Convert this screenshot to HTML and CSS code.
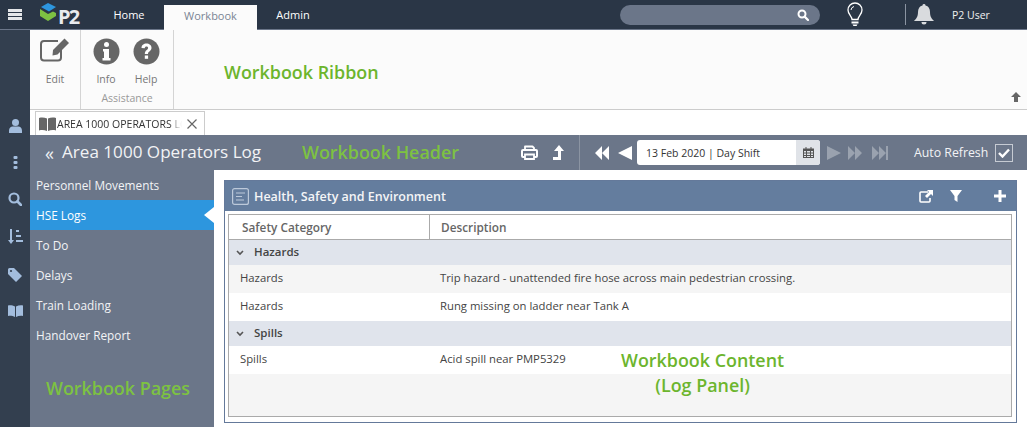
FILE: index.html
```html
<!DOCTYPE html>
<html lang="en">
<head>
<meta charset="utf-8">
<title>Area 1000 Operators Log</title>
<link rel="stylesheet" href="styles.css">
</head>
<body>
<div class="app">
  <header class="top">
    <button class="burger" aria-label="Menu"><span></span><span></span><span></span></button>
    <div class="logo">
      <svg class="logo-mark" width="22" height="22" viewBox="0 0 22 22">
        <polygon points="1,5 8,1 16,5 9,9.500" fill="#2d96de"/>
        <polygon points="0,7 8,12 13,9.500 16,11 16,14 8,19 0,14" fill="#7dc242"/>
      </svg>
      <span class="logo-text">P2</span>
    </div>
    <nav class="top-tabs">
      <a class="top-tab">Home</a>
      <a class="top-tab active">Workbook</a>
      <a class="top-tab">Admin</a>
    </nav>
    <div class="search">
      <svg width="12" height="12" viewBox="0 0 12 12"><circle cx="5" cy="5" r="3.500" fill="none" stroke="#fff" stroke-width="2"/><path d="M7.600 7.600L11 11" stroke="#fff" stroke-width="2.200" stroke-linecap="round"/></svg>
    </div>
    <svg class="bulb" width="16" height="26" viewBox="0 0 16 26"><path d="M5 17.500C5 14.500 1 12.500 1 8a7 7 0 0 1 14 0c0 4.500-4 6.500-4 9.500z" fill="none" stroke="#fff" stroke-width="1.300"/><path d="M4 8a4 4 0 0 1 3-3.500" fill="none" stroke="#fff" stroke-width="1"/><path d="M4.500 19.500h7v2h-7zM5.500 22.500h5l-1 1.500h-3z" fill="#fff"/></svg>
    <div class="top-sep"></div>
    <svg class="bell" width="20" height="21" viewBox="0 0 20 21"><path d="M10 0a1.500 1.500 0 0 1 1.500 1.600C14.500 2.300 16 4.800 16 8c0 4.500 1.500 6.500 4 9H0c2.500-2.500 4-4.500 4-9 0-3.200 1.500-5.700 4.500-6.400A1.500 1.500 0 0 1 10 0zM7.500 18h5a2.500 2.500 0 0 1-5 0z" fill="#d9dbde"/></svg>
    <span class="user">P2 User</span>
  </header>

  <div class="main">
    <aside class="rail">
      <svg width="13" height="14" viewBox="0 0 13 14"><circle cx="6.500" cy="3.500" r="3.500" fill="#a3bddd"/><path d="M0 14v-2.500C0 9 2 7.500 3.500 7.500h6C11 7.500 13 9 13 11.500V14z" fill="#a3bddd"/></svg>
      <svg width="5" height="13" viewBox="0 0 5 13"><rect x="0.500" width="4" height="3" rx="1" fill="#a3bddd"/><rect x="0.500" y="5" width="4" height="3" rx="1" fill="#a3bddd"/><rect x="0.500" y="10" width="4" height="3" rx="1" fill="#a3bddd"/></svg>
      <svg width="14" height="14" viewBox="0 0 14 14"><circle cx="6" cy="6" r="4.500" fill="none" stroke="#a3bddd" stroke-width="2.200"/><path d="M9.500 9.500L13 13" stroke="#a3bddd" stroke-width="2.600" stroke-linecap="round"/></svg>
      <svg width="15" height="16" viewBox="0 0 15 16"><path d="M2 0h2v11h2l-3 4-3-4h2z" fill="#a3bddd"/><path d="M8 1h3v2H8zM8 6h5v2H8zM8 11h7v2H8z" fill="#a3bddd"/></svg>
      <svg width="14" height="14" viewBox="0 0 14 14"><path d="M0 1.500A1.500 1.500 0 0 1 1.500 0H6l8 8-6 6-8-8z" fill="#a3bddd"/><circle cx="3" cy="3" r="1.100" fill="#333f4f"/></svg>
      <svg width="15" height="12" viewBox="0 0 15 12"><path d="M0 .5C2.500 0 5 .5 7 1.500V12C5 11 2.500 10.500 0 11zM15 .5C12.500 0 10 .5 8 1.500V12c2-1 4.500-1.500 7-1z" fill="#a3bddd"/></svg>
    </aside>

    <div class="work">
      <section class="ribbon">
        <div class="rib-group rib-edit">
          <div class="rib-item">
            <svg class="rib-icon" width="30" height="25" viewBox="0 0 30 25"><path d="M21 11v8.500a3 3 0 0 1-3 3H4a3 3 0 0 1-3-3V6a3 3 0 0 1 3-3h14" fill="none" stroke="#666" stroke-width="2"/><path d="M10 12L21.500 .5l4.500 4.500L14.500 16.500l-5 1z" fill="#666" transform="translate(3,0)"/></svg>
            <span>Edit</span>
          </div>
        </div>
        <div class="rib-group rib-assist">
          <div class="rib-items">
            <div class="rib-item">
              <svg class="rib-icon" width="27" height="27" viewBox="0 0 27 27"><circle cx="13.500" cy="13.500" r="13" fill="#666"/><circle cx="13.500" cy="6.500" r="2.500" fill="#fff"/><path d="M10 11h6v9h1.500v2.500h-8V20H11v-6.500h-1z" fill="#fff"/></svg>
              <span>Info</span>
            </div>
            <div class="rib-item">
              <svg class="rib-icon" width="27" height="27" viewBox="0 0 27 27"><circle cx="13.500" cy="13.500" r="13" fill="#666"/><path d="M8.500 10c0-3 2.300-4.500 5-4.500s5 1.700 5 4.300c0 3.500-3.500 3.500-3.500 6.200h-3.200c0-4 3.300-4.200 3.300-6 0-1-.7-1.500-1.600-1.500-1 0-1.600.6-1.800 1.800z" fill="#fff"/><rect x="11.800" y="17.500" width="3.300" height="3.300" fill="#fff"/></svg>
              <span>Help</span>
            </div>
          </div>
          <div class="rib-title">Assistance</div>
        </div>
        <svg class="rib-collapse" width="10" height="10" viewBox="0 0 10 10"><path d="M5 0l5 5H7v5H3V5H0z" fill="#666"/></svg>
      </section>

      <div class="tabstrip">
        <div class="doc-tab">
          <svg width="17" height="14" viewBox="0 0 17 14"><path d="M0 1c3-.8 5.500-.5 8 .5V14c-2.500-1-5-1.300-8-.5zM17 1c-3-.8-5.500-.5-8 .5V14c2.500-1 5-1.300 8-.5z" fill="#666"/></svg>
          <span class="doc-title">AREA 1000 OPERATORS LOG</span>
          <svg class="doc-close" width="10" height="10" viewBox="0 0 10 10"><path d="M.5.500l9 9M9.500.500l-9 9" stroke="#666" stroke-width="1.200"/></svg>
        </div>
      </div>

      <div class="wb-header">
        <span class="back">«</span>
        <h1 class="wb-title">Area 1000 Operators Log</h1>
        <svg class="print" width="17" height="15" viewBox="0 0 17 15"><path d="M4 5V1.500h7.500L13 3v2" fill="none" stroke="#fff" stroke-width="1.800" stroke-linejoin="round"/><path d="M4 12H2a1 1 0 0 1-1-1V6a1 1 0 0 1 1-1h13a1 1 0 0 1 1 1v5a1 1 0 0 1-1 1h-2" fill="none" stroke="#fff" stroke-width="2"/><path d="M4 9.500h9V14H4z" fill="none" stroke="#fff" stroke-width="1.800"/></svg>
        <svg class="up" width="12" height="15" viewBox="0 0 12 15"><path d="M6 0l5 6H8v9H0v-3h5V6H1z" fill="#fff"/></svg>
        <div class="head-sep"></div>
        <svg class="nav nav-rw" width="15" height="14" viewBox="0 0 15 14"><path d="M8 0v14L1 7zM15 0v14L8 7z" fill="#fff"/></svg>
        <svg class="nav nav-prev" width="14" height="14" viewBox="0 0 14 14"><path d="M14 0v14L0 7z" fill="#fff"/></svg>
        <div class="date">
          <span class="date-text">13 Feb 2020 | Day Shift</span>
          <span class="date-btn"><svg width="11" height="11" viewBox="0 0 11 11"><path d="M0 1.500h11V11H0z" fill="#555"/><path d="M2.500 0h1v2.500h-1zM7.500 0h1v2.500h-1z" fill="#555"/><path d="M1 4h2v1.500H1zM4 4h3v1.500H4zM8 4h2v1.500H8zM1 6.500h2V8H1zM4 6.500h3V8H4zM8 6.500h2V8H8zM1 9h2v1H1zM4 9h3v1H4zM8 9h2v1H8z" fill="#e0e3e8"/></svg></span>
        </div>
        <svg class="nav nav-next" width="14" height="14" viewBox="0 0 14 14"><path d="M0 0v14l14-7z" fill="#9aa2af"/></svg>
        <svg class="nav nav-ff" width="15" height="14" viewBox="0 0 15 14"><path d="M0 0v14l7-7zM7 0v14l7-7z" fill="#9aa2af"/></svg>
        <svg class="nav nav-end" width="16" height="14" viewBox="0 0 16 14"><path d="M0 0v14l7-7zM7 0v14l7-7zM14 0h2v14h-2z" fill="#9aa2af"/></svg>
        <span class="auto">Auto Refresh</span>
        <span class="check"><svg width="12" height="10" viewBox="0 0 12 10"><path d="M1 5l3.500 3.500L11 1.500" fill="none" stroke="#fff" stroke-width="2.400"/></svg></span>
      </div>

      <div class="body">
        <nav class="pages">
          <a class="page">Personnel Movements</a>
          <a class="page active">HSE Logs</a>
          <a class="page">To Do</a>
          <a class="page">Delays</a>
          <a class="page">Train Loading</a>
          <a class="page">Handover Report</a>
        </nav>
        <main class="content">
          <section class="panel">
            <div class="panel-head">
              <svg width="17" height="17" viewBox="0 0 17 17"><rect x=".6" y=".6" width="15.800" height="15.800" rx="2" fill="none" stroke="#bcc9da" stroke-width="1.200"/><path d="M4 5h9M4 8.500h6M4 12h8" stroke="#bcc9da" stroke-width="1.200"/></svg>
              <h2>Health, Safety and Environment</h2>
              <svg class="ph-open" width="14" height="13" viewBox="0 0 14 13"><path d="M9 2H2a1 1 0 0 0-1 1v8a1 1 0 0 0 1 1h8a1 1 0 0 0 1-1V8" fill="none" stroke="#fff" stroke-width="1.600"/><path d="M8 0h6v6l-2-2-4 4-2-2 4-4z" fill="#fff"/></svg>
              <svg class="ph-filter" width="12" height="12" viewBox="0 0 12 12"><path d="M0 0h12L7.500 6v6l-3-2V6z" fill="#fff"/></svg>
              <svg class="ph-add" width="12" height="12" viewBox="0 0 12 12"><path d="M4.500 0h3v4.500H12v3H7.500V12h-3V7.500H0v-3h4.500z" fill="#fff"/></svg>
            </div>
            <div class="grid">
              <div class="row head"><div class="c1">Safety Category</div><div class="c2">Description</div></div>
              <div class="row group"><svg width="8" height="6" viewBox="0 0 8 6"><path d="M1 1l3 3 3-3" fill="none" stroke="#555" stroke-width="1.600"/></svg><span>Hazards</span></div>
              <div class="row item alt"><div class="c1">Hazards</div><div class="c2">Trip hazard - unattended fire hose across main pedestrian crossing.</div></div>
              <div class="row item"><div class="c1">Hazards</div><div class="c2">Rung missing on ladder near Tank A</div></div>
              <div class="row group"><svg width="8" height="6" viewBox="0 0 8 6"><path d="M1 1l3 3 3-3" fill="none" stroke="#555" stroke-width="1.600"/></svg><span>Spills</span></div>
              <div class="row item"><div class="c1">Spills</div><div class="c2">Acid spill near PMP5329</div></div>
            </div>
          </section>
        </main>
      </div>
    </div>
  </div>

  <div class="note note-ribbon">Workbook Ribbon</div>
  <div class="note note-header">Workbook Header</div>
  <div class="note note-pages">Workbook Pages</div>
  <div class="note note-content">Workbook Content<br>(Log Panel)</div>
</div>
</body>
</html>
```

FILE: styles.css
```css
* { box-sizing: border-box; }
html, body { margin: 0; padding: 0; }
body { font-family: "Open Sans", "Noto Sans", sans-serif; font-size: 11.300px; color: #444; background: #fff; }
svg { display: block; flex: none; }
.app { position: relative; width: 1027px; height: 427px; overflow: hidden; display: flex; flex-direction: column; }

.top { height: 30px; flex: none; background: #2a3646; border-bottom: 1px solid #6b7689; display: flex; align-items: center; color: #fff; }
.burger { width: 14px; height: 11px; margin-left: 8px; padding: 0; border: 0; background: none; display: flex; flex-direction: column; justify-content: space-between; }
.burger span { display: block; height: 3px; background: #e4e6e9; }
.logo { display: flex; align-items: flex-start; margin-left: 18px; width: 40px; height: 29px; padding-top: 2px; }
.logo-text { font-weight: 700; font-size: 20px; line-height: 24px; letter-spacing: -1.800px; color: #e9ebee; margin-left: -4px; margin-top: 3px; }
.top-tabs { display: flex; margin-left: 34px; align-self: stretch; }
.top-tab { display: flex; align-items: center; justify-content: center; height: 29px; padding: 0 20px 0 0; width: 50px; font-size: 11px; color: #fff; }
.top-tab.active { margin-top: 5px; height: 25px; width: 93px; padding: 0 0 4px; background: #fbfbfb; color: #7a8494; margin-right: 21px; }
.search { margin-left: 292px; width: 200px; height: 20px; border-radius: 10px; background: #6b7689; display: flex; align-items: center; justify-content: flex-end; padding-right: 11px; }
.bulb { margin-left: 27px; }
.top-sep { width: 1px; height: 21px; margin-left: 42px; background: #8b94a2; }
.bell { margin-left: 8px; }
.user { margin-left: 18px; font-size: 10.500px; color: #f0f0f0; }

.main { flex: 1; min-height: 0; display: flex; }
.rail { width: 30px; flex: none; background: #333f4f; display: flex; flex-direction: column; align-items: center; padding-top: 89px; gap: 23px; }
.work { flex: 1; min-width: 0; display: flex; flex-direction: column; }

.ribbon { position: relative; height: 80px; flex: none; background: #fbfbfb; border-bottom: 1px solid #ccc; display: flex; }
.rib-group { border-right: 1px solid #d4d4d4; color: #777; font-size: 10.500px; }
.rib-edit { width: 51px; display: flex; justify-content: center; padding-top: 8px; }
.rib-assist { width: 93px; padding-top: 8px; }
.rib-items { display: flex; justify-content: center; gap: 13px; padding-right: 2px; }
.rib-item { display: flex; flex-direction: column; align-items: center; width: 27px; height: 48px; }
.rib-item span { margin-top: auto; line-height: 14px; }
.rib-title { text-align: center; color: #999; line-height: 14px; margin-top: 5px; }
.rib-collapse { position: absolute; right: 6px; bottom: 7px; }

.tabstrip { height: 25px; flex: none; background: #fff; padding: 1px 0 0 5px; }
.doc-tab { width: 170px; height: 24px; background: #fff; border: 1px solid #ccc; border-bottom: 0; display: flex; align-items: center; padding-left: 3px; }
.doc-title { margin-left: 1px; width: 125px; white-space: nowrap; overflow: hidden; color: #333; font-size: 10.500px; -webkit-mask-image: linear-gradient(90deg, #000 90%, transparent); mask-image: linear-gradient(90deg, #000 90%, transparent); }
.doc-close { margin-left: 5px; }

.wb-header { height: 35px; flex: none; background: #6b7689; display: flex; align-items: center; color: #fff; }
.back { margin-left: 15px; width: 17px; font-size: 18px; line-height: 20px; color: #eef0f3; }
.wb-title { margin: 0 0 2px; width: 459px; font-size: 17.100px; font-weight: 400; color: #f2f3f5; white-space: nowrap; }
.up { margin-left: 15px; }
.head-sep { width: 1px; height: 35px; margin-left: 14px; background: #8b94a2; }
.nav-rw { margin-left: 14px; }
.nav-prev { margin-left: 9px; }
.date { margin-left: 5px; width: 183px; height: 25px; background: #fff; border-radius: 3px; display: flex; align-items: center; overflow: hidden; }
.date-text { flex: 1; padding-left: 9px; color: #333; font-size: 10.500px; }
.date-btn { width: 24px; height: 25px; background: #e0e3e8; display: flex; align-items: center; justify-content: center; }
.nav-next { margin-left: 7px; }
.nav-ff { margin-left: 7px; }
.nav-end { margin-left: 9px; }
.auto { margin-left: 26px; width: 81px; font-size: 12.300px; color: #f2f3f5; white-space: nowrap; }
.check { width: 18px; height: 18px; border: 1px solid #c6cbd3; display: flex; align-items: center; justify-content: center; }

.body { flex: 1; min-height: 0; display: flex; }
.pages { width: 184px; flex: none; background: #6b7689; display: flex; flex-direction: column; }
.page { position: relative; height: 30px; padding: 0 0 1px 6px; display: flex; align-items: center; color: #f2f3f5; font-size: 11.800px; }
.page.active { background: #2d96de; color: #fff; }
.page.active::after { content: ""; position: absolute; right: 0; top: 7px; border: 8px solid transparent; border-left-width: 0; border-right: 10px solid #fff; }
.content { flex: 1; min-width: 0; padding: 10px 10px 4px; background: #fff; }
.panel { height: 243px; border: 1px solid #64799a; display: flex; flex-direction: column; padding-bottom: 5px; }
.panel-head { height: 30px; flex: none; background: #647d9e; display: flex; align-items: center; padding-left: 7px; color: #fff; margin: 0; }
.panel-head h2 { margin: 0 0 0 5px; font-size: 12.500px; font-weight: 600; color: #f4f5f7; white-space: nowrap; width: 665px; }
.ph-filter { margin-left: 17px; }
.ph-add { margin-left: 32px; }

.grid { flex: 1; margin: 3px 4px 0 3px; border: 1px solid #aaa; background: #f5f5f5; display: flex; flex-direction: column; }
.row { display: flex; align-items: center; flex: none; }
.head { height: 25px; background: #fff; border-bottom: 1px solid #aaa; font-weight: 600; color: #666; font-size: 11.800px; }
.head .c1 { width: 201px; padding-left: 13px; border-right: 1px solid #aaa; height: 24px; line-height: 24px; }
.head .c2 { padding-left: 11px; }
.group { height: 25px; background: #e0e4ec; padding: 0 0 2px 7px; font-weight: 600; color: #444; font-size: 11.500px; }
.group svg { margin-top: 2px; }
.group span { margin-left: 10px; }
.item { height: 28px; padding-bottom: 4px; background: #fff; color: #444; }
.item.alt { background: #f5f5f5; }
.item .c1 { width: 201px; padding-left: 11px; }
.item .c2 { padding-left: 10px; white-space: nowrap; }

.note { position: absolute; color: #6cb52d; font-size: 17.900px; font-weight: 600; line-height: 24px; white-space: nowrap; }
.note-ribbon { left: 224px; top: 60px; }
.note-header { left: 302px; top: 140px; color: #7dc242; }
.note-pages { left: 46px; top: 376px; color: #7dc242; }
.note-content { left: 621px; top: 348px; text-align: center; line-height: 25px; }
```
